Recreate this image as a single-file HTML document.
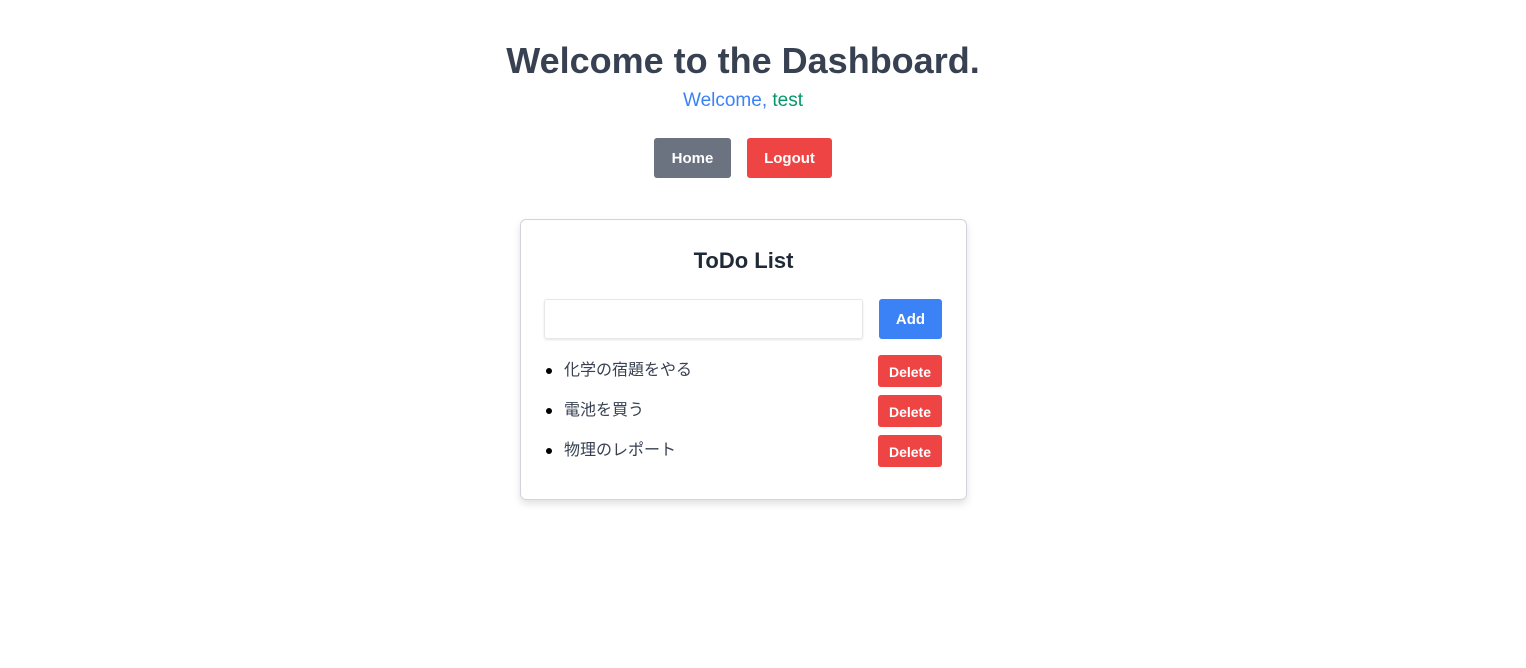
<!DOCTYPE html>
<html><head><meta charset="utf-8"><style>
body{margin:0;width:1526px;height:668px;background:#fff;font-family:"Liberation Sans","Noto Sans CJK JP",sans-serif;position:relative;overflow:hidden}
.a{position:absolute}
h1{position:absolute;left:0;width:1486px;top:39px;margin:0;text-align:center;font-size:36px;font-weight:bold;color:#374151;line-height:44px}
.sub{left:0;width:1486px;top:89px;text-align:center;font-size:19px;line-height:24px;color:#3b82f6}
.btn{position:absolute;color:#fff;font-weight:bold;font-size:15px;border-radius:3px;display:flex;align-items:center;justify-content:center;padding-top:1px;box-sizing:border-box}
.card{left:520px;top:219px;width:445px;height:279px;border:1px solid #d1d5db;border-radius:6px;box-shadow:0 4px 8px rgba(0,0,0,.12)}
.li{position:absolute;left:564px;font-size:16px;color:#374151;line-height:20px}
.dot{position:absolute;left:546px;width:6px;height:6px;border-radius:50%;background:#000}
.del{background:#ef4444;left:878px;width:64px;height:32px;font-size:14px}
</style></head><body>
<h1>Welcome to the Dashboard.</h1>
<div class="a sub">Welcome, <span style="color:#059669">test</span></div>
<div class="btn" style="left:654px;top:138px;width:77px;height:40px;background:#6b7280">Home</div>
<div class="btn" style="left:747px;top:138px;width:85px;height:40px;background:#ef4444">Logout</div>
<div class="a card"></div>
<div class="a" style="left:520px;width:447px;top:247px;text-align:center;font-size:22px;font-weight:bold;color:#1f2937;line-height:28px">ToDo List</div>
<div class="a" style="left:544px;top:299px;width:317px;height:38px;border:1px solid #e5e7eb;border-radius:3px;box-shadow:0 1px 2px rgba(0,0,0,.1)"></div>
<div class="btn" style="left:879px;top:299px;width:63px;height:40px;background:#3b82f6">Add</div>
<div class="dot" style="top:368px"></div><div class="li" style="top:361px">化学の宿題をやる</div>
<div class="btn del" style="top:355px">Delete</div>
<div class="dot" style="top:408px"></div><div class="li" style="top:401px">電池を買う</div>
<div class="btn del" style="top:395px">Delete</div>
<div class="dot" style="top:448px"></div><div class="li" style="top:441px">物理のレポート</div>
<div class="btn del" style="top:435px">Delete</div>
</body></html>
